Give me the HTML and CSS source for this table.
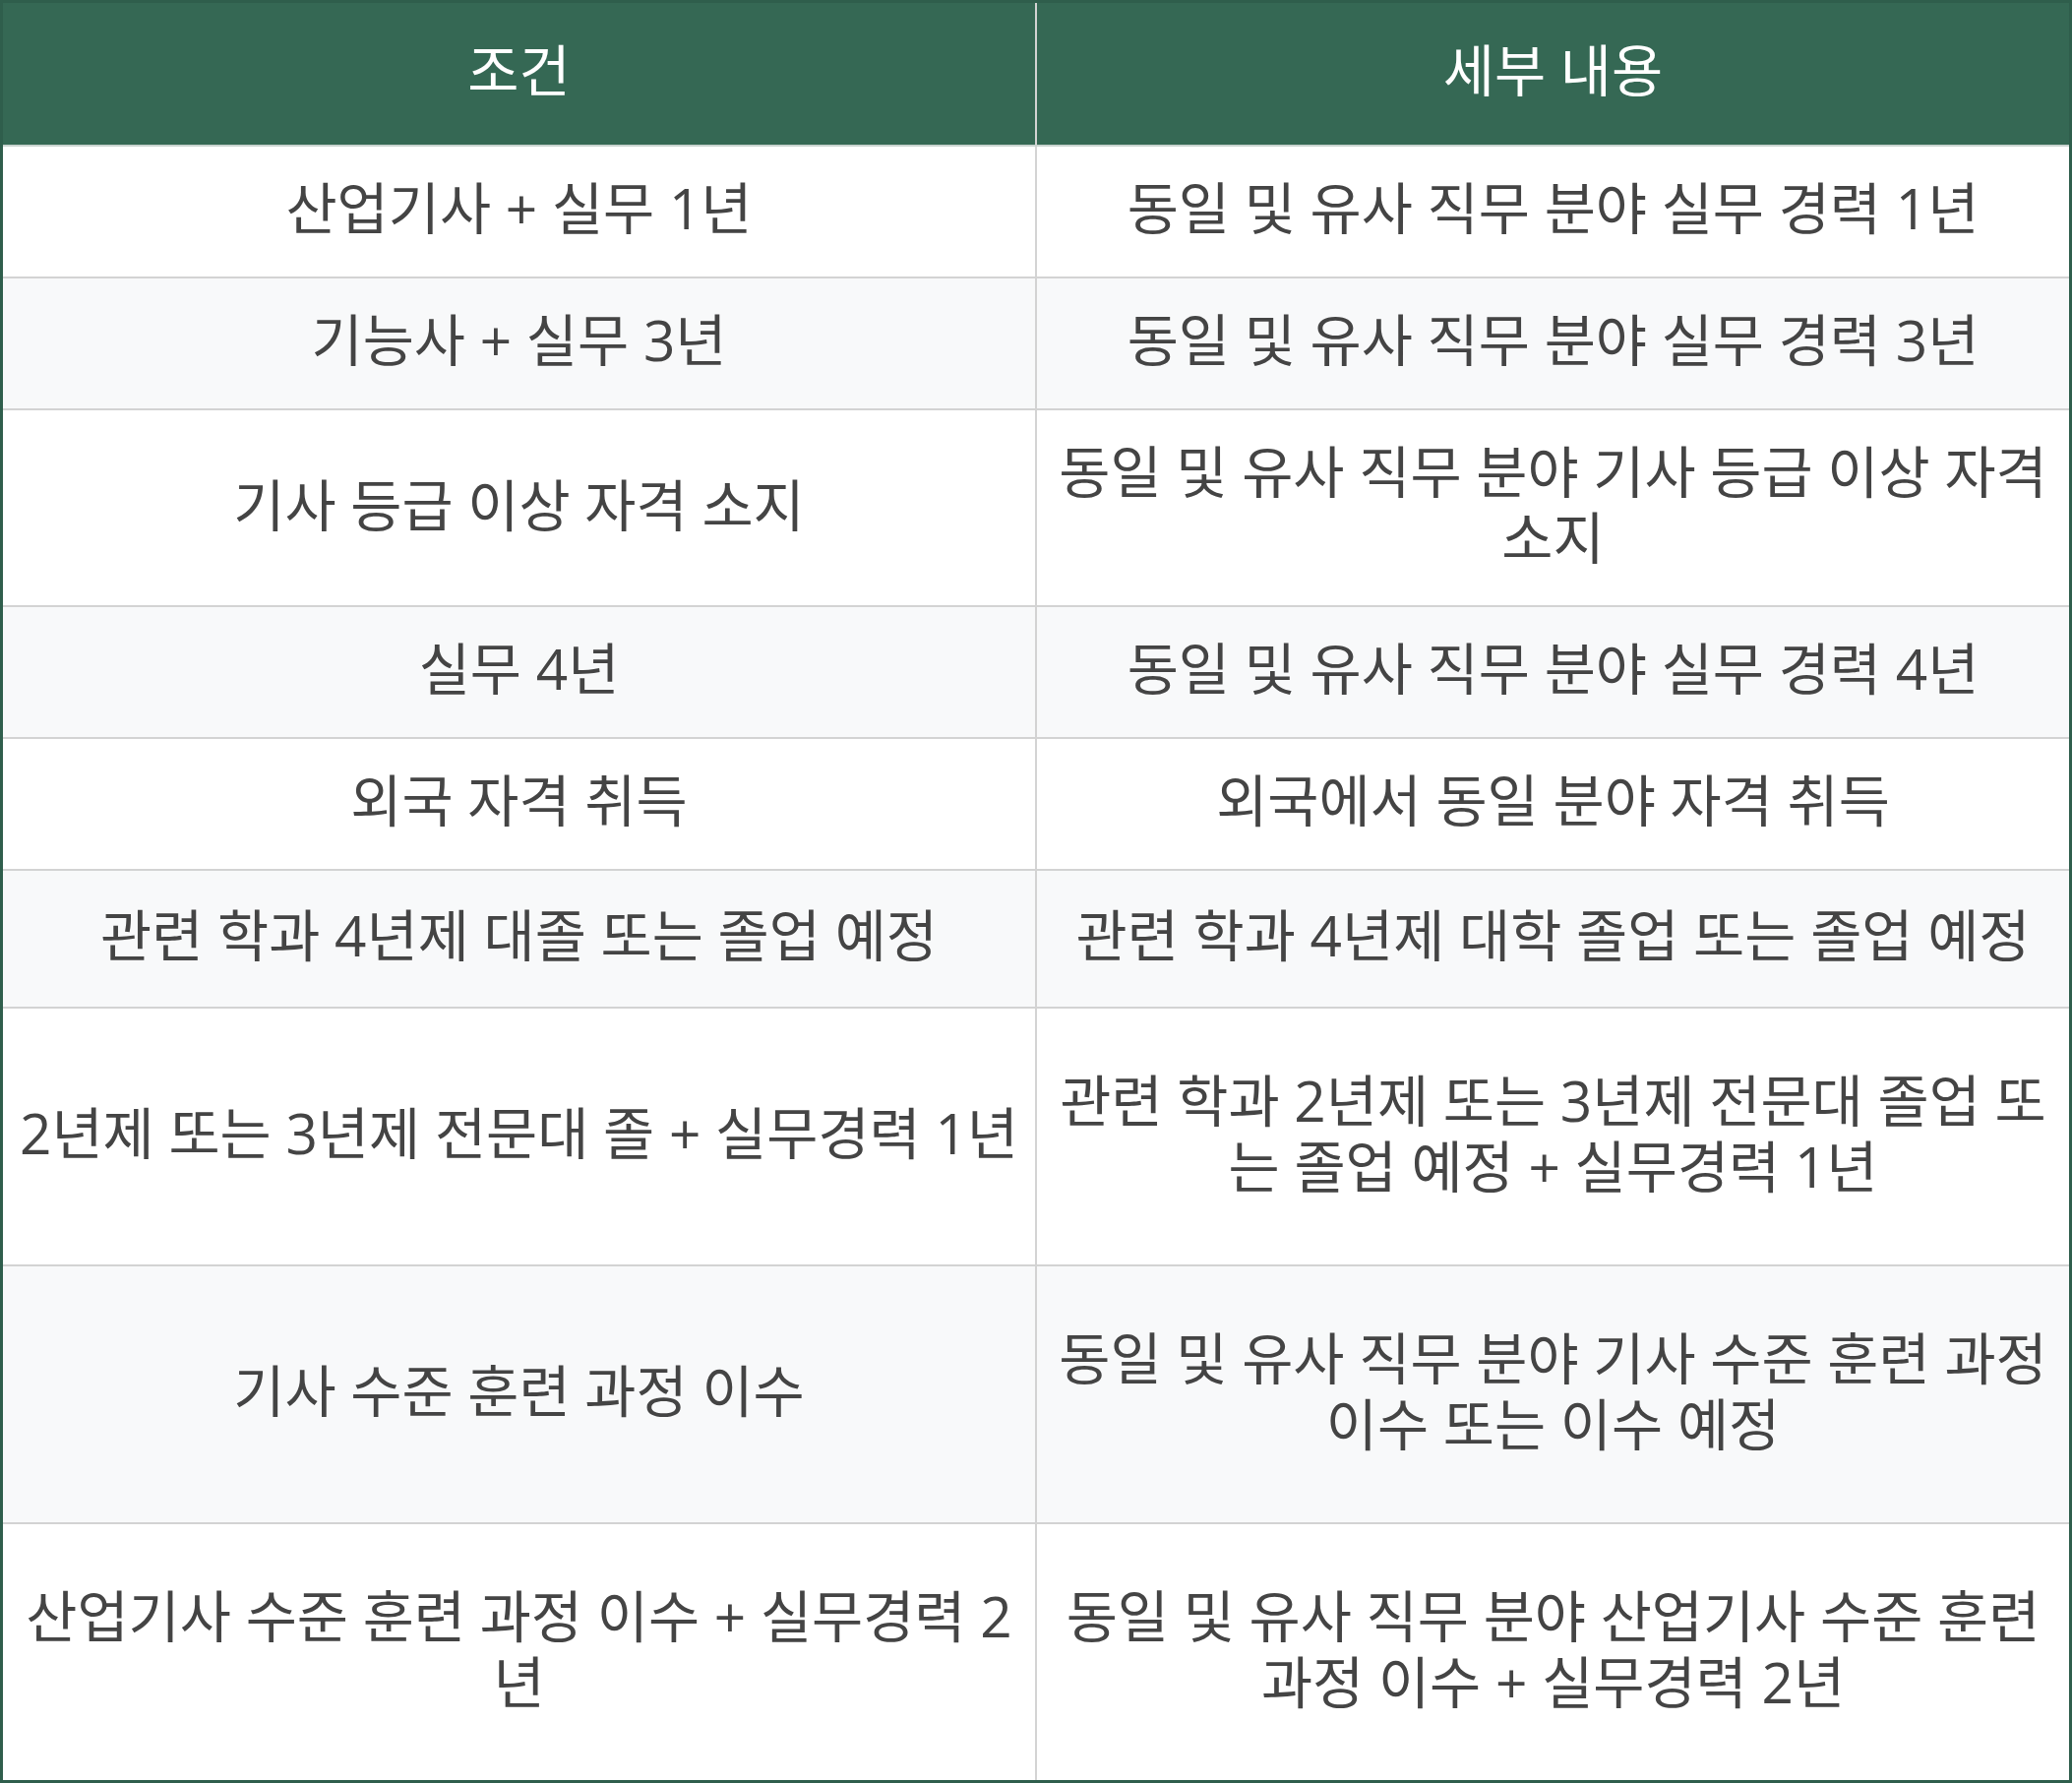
FILE: index.html
```html
<!DOCTYPE html>
<html lang="ko">
<head>
<meta charset="utf-8">
<title>응시 자격 조건</title>
<link rel="stylesheet" href="styles.css">
</head>
<body>
<table class="qual">
  <thead>
    <tr><th>조건</th><th>세부 내용</th></tr>
  </thead>
  <tbody>
    <tr><td>산업기사 + 실무 1년</td><td>동일 및 유사 직무 분야 실무 경력 1년</td></tr>
    <tr><td>기능사 + 실무 3년</td><td>동일 및 유사 직무 분야 실무 경력 3년</td></tr>
    <tr class="two"><td>기사 등급 이상 자격 소지</td><td>동일 및 유사 직무 분야 기사 등급 이상 자격 소지</td></tr>
    <tr><td>실무 4년</td><td>동일 및 유사 직무 분야 실무 경력 4년</td></tr>
    <tr><td>외국 자격 취득</td><td>외국에서 동일 분야 자격 취득</td></tr>
    <tr class="mid"><td>관련 학과 4년제 대졸 또는 졸업 예정</td><td>관련 학과 4년제 대학 졸업 또는 졸업 예정</td></tr>
    <tr class="tall"><td>2년제 또는 3년제 전문대 졸 + 실무경력 1년</td><td>관련 학과 2년제 또는 3년제 전문대 졸업 또는 졸업 예정 + 실무경력 1년</td></tr>
    <tr class="tall"><td>기사 수준 훈련 과정 이수</td><td>동일 및 유사 직무 분야 기사 수준 훈련 과정 이수 또는 이수 예정</td></tr>
    <tr class="tall"><td>산업기사 수준 훈련 과정 이수 + 실무경력 2년</td><td>동일 및 유사 직무 분야 산업기사 수준 훈련 과정 이수 + 실무경력 2년</td></tr>
  </tbody>
</table>
</body>
</html>
```
FILE: styles.css
```css
html, body {
  margin: 0;
  padding: 0;
  background: #ffffff;
}

.qual {
  width: 2106px;
  border-collapse: collapse;
  table-layout: fixed;
  border: 3px solid #2f5e4c;
  font-family: "Open Sans", "Noto Sans CJK KR", sans-serif;
  font-size: 56.7px;
  line-height: 67px;
  color: #444444;
}

.qual th,
.qual td {
  width: 50%;
  text-align: center;
  vertical-align: middle;
  padding: 29px 12px 36px;
  border: 2px solid #d3d3d3;
}

.qual th {
  background: #356854;
  color: #ffffff;
  font-weight: normal;
  padding: 35px 12px 42px;
  border-top: 0;
  border-bottom: 2px solid #c9d3cf;
}

.qual th:first-child,
.qual td:first-child {
  border-left: 0;
}

.qual th:last-child,
.qual td:last-child {
  border-right: 0;
}

.qual tbody tr:nth-child(odd) {
  background: #ffffff;
}

.qual tbody tr:nth-child(even) {
  background: #f8f9fa;
}

.qual tbody tr:last-child td {
  border-bottom: 0;
}

.qual tr.two td {
  padding-bottom: 35px;
}

.qual tr.mid td {
  height: 73px;
}

.qual tr.tall td {
  height: 195px;
}
```
